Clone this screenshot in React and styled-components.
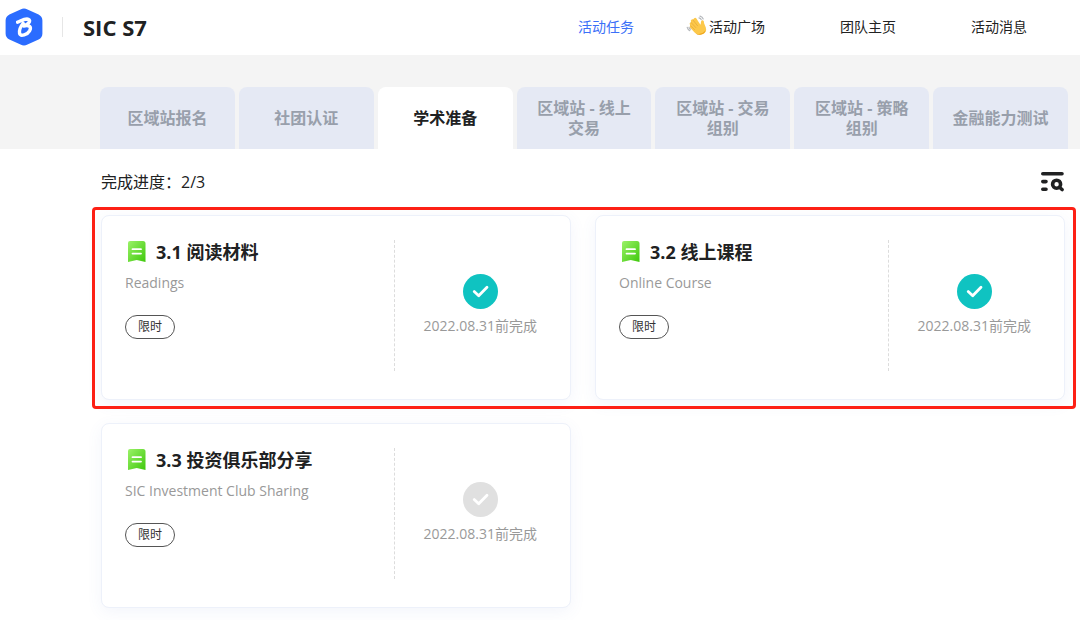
import React from 'react';
import styled, { createGlobalStyle } from 'styled-components';

const GlobalStyle = createGlobalStyle`
  *, *::before, *::after { box-sizing: border-box; }
  body {
    margin: 0;
    background: #fff;
    color: #202122;
    font-family: "Open Sans", "Noto Sans CJK SC", sans-serif;
    font-size: 14px;
  }
  button { font: inherit; border: 0; background: none; padding: 0; cursor: pointer; }
  h1, h2, p { margin: 0; }
`;

const Header = styled.header`
  display: flex;
  align-items: center;
  height: 55px;
  padding: 0 53px 2px 5px;
  background: #fff;
`;

const LogoLink = styled.a`
  display: flex;
`;

const Brand = styled.h1`
  margin-left: 19px;
  padding-left: 20px;
  border-left: 1px solid #e6e6e6;
  font-size: 22px;
  line-height: 20px;
  font-weight: 700;
`;

const Nav = styled.nav`
  display: flex;
  gap: 75px;
  margin-left: auto;
`;

const NavLink = styled.a`
  position: relative;
  color: ${(p) => (p.$active ? '#3b70f8' : '#222')};
  text-decoration: none;
  line-height: 20px;
  white-space: nowrap;
`;

const WaveIcon = styled.svg`
  position: absolute;
  top: -2px;
  right: 100%;
`;

const TabBar = styled.div`
  padding: 32px 12px 0 100px;
  background: #f4f4f4;
`;

const TabList = styled.div`
  display: flex;
  gap: 4px;
`;

const Tab = styled.button`
  flex: 1 1 0;
  min-width: 0;
  height: 62px;
  && { padding: 0 19px; }
  border-radius: 8px 8px 0 0;
  && { background: ${(p) => (p.$active ? '#fff' : '#e5e9f4')}; }
  color: ${(p) => (p.$active ? '#202122' : '#989fab')};
  && {
    font-size: 16px;
    font-weight: 700;
    line-height: 20px;
  }
`;

const Main = styled.main`
  padding: 20px 15px 12px 101px;
`;

const Toolbar = styled.div`
  display: flex;
  align-items: center;
  justify-content: space-between;
  height: 26px;
  margin-bottom: 20px;
`;

const Progress = styled.p`
  font-size: 16px;
  line-height: 24px;
`;

const FilterButton = styled.button`
  display: flex;
`;

const CardRow = styled.section`
  position: relative;
  display: grid;
  grid-template-columns: 1fr 1fr;
  gap: 24px;
  margin-bottom: ${(p) => (p.$last ? 0 : 23)}px;
`;

const Highlight = styled.div`
  position: absolute;
  inset: -8px -11px -9px -9px;
  border: 3px solid #fd2015;
  border-radius: 4px;
  pointer-events: none;
`;

const Card = styled.article`
  display: grid;
  grid-template-columns: 5fr 3fr;
  padding: 24px 0 28px;
  border: 1px solid #edf1fa;
  border-radius: 8px;
  background: #fff;
  box-shadow: 0 4px 16px rgba(90, 120, 200, 0.07);
`;

const CardInfo = styled.div`
  min-height: 131px;
  padding-left: 23px;
  border-right: 1px dashed #dcdcdc;
`;

const CardTitle = styled.h2`
  display: flex;
  align-items: center;
  gap: 8px;
  font-size: 18px;
  font-weight: 700;
  line-height: 24px;
`;

const Subtitle = styled.p`
  margin-top: 7px;
  color: #999;
  line-height: 24px;
`;

const Tag = styled.span`
  display: inline-block;
  margin-top: 20px;
  padding: 0 12px;
  border: 1px solid #555;
  border-radius: 12px;
  color: #333;
  font-size: 12px;
  line-height: 22px;
`;

const CardStatus = styled.div`
  display: flex;
  flex-direction: column;
  align-items: center;
  justify-content: center;
  gap: 6px;
  padding: 0 4px 1px 0;
  color: #999;
  line-height: 22px;
`;

const Logo = () => (
  <svg width="38" height="38" viewBox="0 0 38 38" aria-hidden="true">
    <path
      d="M15.5 1.4 Q19 -0.4 22.5 1.4 L33.6 6.6 Q37.4 8.6 37.4 12.6 V25.4 Q37.4 29.4 33.6 31.4 L22.5 36.6 Q19 38.4 15.5 36.6 L4.4 31.4 Q0.6 29.4 0.6 25.4 V12.6 Q0.6 8.6 4.4 6.6 Z"
      fill="#2b6cff"
    />
    <path
      d="M12.6 14.2 C15.4 13.2 18.4 11 22 11 C26.4 11.2 25.4 15.4 18.6 18 C25 16.6 26.6 19 24.6 22.8 C22.4 26.6 15.6 28.8 14.6 25.6 C14 23 15.6 18.4 18.2 15.2"
      fill="none"
      stroke="#fff"
      strokeWidth="3.4"
      strokeLinecap="round"
      strokeLinejoin="round"
    />
  </svg>
);

const Wave = () => (
  <WaveIcon width="23" height="22" viewBox="0 0 23 22" aria-hidden="true">
    <path
      d="M8.2 3.2 Q9.4 2.2 10.4 3.6 L13.6 8.4 L14.6 9.8 L15 6.8 Q15.6 4.8 17.2 5.6 Q18.2 6.2 18 8 L19.8 12.4 Q21.2 17 16.8 19 Q12 21.2 8.6 17.4 L4 12.6 Q3.2 11.2 4.4 10.6 L3.6 9 Q3.4 7.4 5 7.4 L4.8 5.6 Q5.4 4 6.8 4.8 Z"
      fill="#fcc84a"
    />
    <path
      d="M5 7.4 L9.8 12.6 M6.8 4.8 L11.6 10.8 M4.4 10.6 L8.6 14.6"
      fill="none"
      stroke="#e8a93a"
      strokeWidth="0.8"
      strokeLinecap="round"
    />
    <path d="M9.4 18.2 Q15 20.8 19.6 15.6 Q18.6 19 15.4 19.6 Q12 20.4 9.4 18.2 Z" fill="#eda51d" />
    <path
      d="M14 1.2 Q16.4 1.8 17.2 4 M13 2.8 Q14.6 3.2 15.2 4.6 M1.2 12.4 Q1.8 14.6 3.8 15.6 M3 12.4 Q3.4 13.6 4.6 14.2"
      fill="none"
      stroke="#b4b7bb"
      strokeWidth="1.2"
      strokeLinecap="round"
    />
  </WaveIcon>
);

const FilterIcon = () => (
  <svg width="25" height="22" viewBox="0 0 25 22" fill="none" stroke="#202122" strokeLinecap="round" aria-hidden="true">
    <path d="M2.8 2.8 H22" strokeWidth="3.6" />
    <path d="M2.8 10.6 H6 M2.8 18.3 H6" strokeWidth="3.6" />
    <circle cx="16.6" cy="13.2" r="4" strokeWidth="3.6" />
    <path d="M20 16.8 L22.2 18.6" strokeWidth="3.4" />
  </svg>
);

const BookmarkIcon = ({ id }) => (
  <svg width="23" height="24" viewBox="0 0 23 24" aria-hidden="true">
    <defs>
      <linearGradient id={id} x1="0" y1="0" x2="1" y2="1">
        <stop offset="0" stopColor="#9bf268" />
        <stop offset="1" stopColor="#3fc80c" />
      </linearGradient>
    </defs>
    <path d="M5 1 H18 Q20.5 1 20.5 3.5 V22 L11.7 20 L3 22 V3 Q3 1 5 1 Z" fill={`url(#${id})`} />
    <path d="M7.5 9.2 H16 M7.5 13.6 H16" stroke="#fff" strokeWidth="1.8" strokeLinecap="round" />
  </svg>
);

const StatusIcon = ({ done }) => (
  <svg width="35" height="35" viewBox="0 0 35 35" role="img" aria-label={done ? '已完成' : '未完成'}>
    <circle cx="17.5" cy="17.5" r="17.5" fill={done ? '#0fc3c1' : '#e0e0e0'} />
    <path
      d="M11.2 17.6 L15.7 21.8 L24 13.3"
      fill="none"
      stroke="#fff"
      strokeWidth="2.8"
      strokeLinecap="round"
      strokeLinejoin="round"
    />
  </svg>
);

const tabs = [
  '区域站报名',
  '社团认证',
  '学术准备',
  '区域站 - 线上交易',
  '区域站 - 交易组别',
  '区域站 - 策略组别',
  '金融能力测试',
];

const TaskCard = ({ id, title, subtitle, done }) => (
  <Card>
    <CardInfo>
      <CardTitle>
        <BookmarkIcon id={id} />
        {title}
      </CardTitle>
      <Subtitle>{subtitle}</Subtitle>
      <Tag>限时</Tag>
    </CardInfo>
    <CardStatus>
      <StatusIcon done={done} />
      <span>2022.08.31前完成</span>
    </CardStatus>
  </Card>
);

export default function App() {
  return (
    <>
      <GlobalStyle />
      <Header>
        <LogoLink href="#" aria-label="SIC S7">
          <Logo />
        </LogoLink>
        <Brand>SIC S7</Brand>
        <Nav>
          <NavLink href="#tasks" $active>活动任务</NavLink>
          <NavLink href="#square"><Wave />活动广场</NavLink>
          <NavLink href="#team">团队主页</NavLink>
          <NavLink href="#news">活动消息</NavLink>
        </Nav>
      </Header>
      <TabBar>
        <TabList role="tablist">
          {tabs.map((label) => (
            <Tab key={label} role="tab" aria-selected={label === '学术准备'} $active={label === '学术准备'}>
              {label}
            </Tab>
          ))}
        </TabList>
      </TabBar>
      <Main>
        <Toolbar>
          <Progress>完成进度：2/3</Progress>
          <FilterButton aria-label="筛选">
            <FilterIcon />
          </FilterButton>
        </Toolbar>
        <CardRow>
          <TaskCard id="readings" title="3.1 阅读材料" subtitle="Readings" done />
          <TaskCard id="course" title="3.2 线上课程" subtitle="Online Course" done />
          <Highlight />
        </CardRow>
        <CardRow $last>
          <TaskCard id="sharing" title="3.3 投资俱乐部分享" subtitle="SIC Investment Club Sharing" />
        </CardRow>
      </Main>
    </>
  );
}
